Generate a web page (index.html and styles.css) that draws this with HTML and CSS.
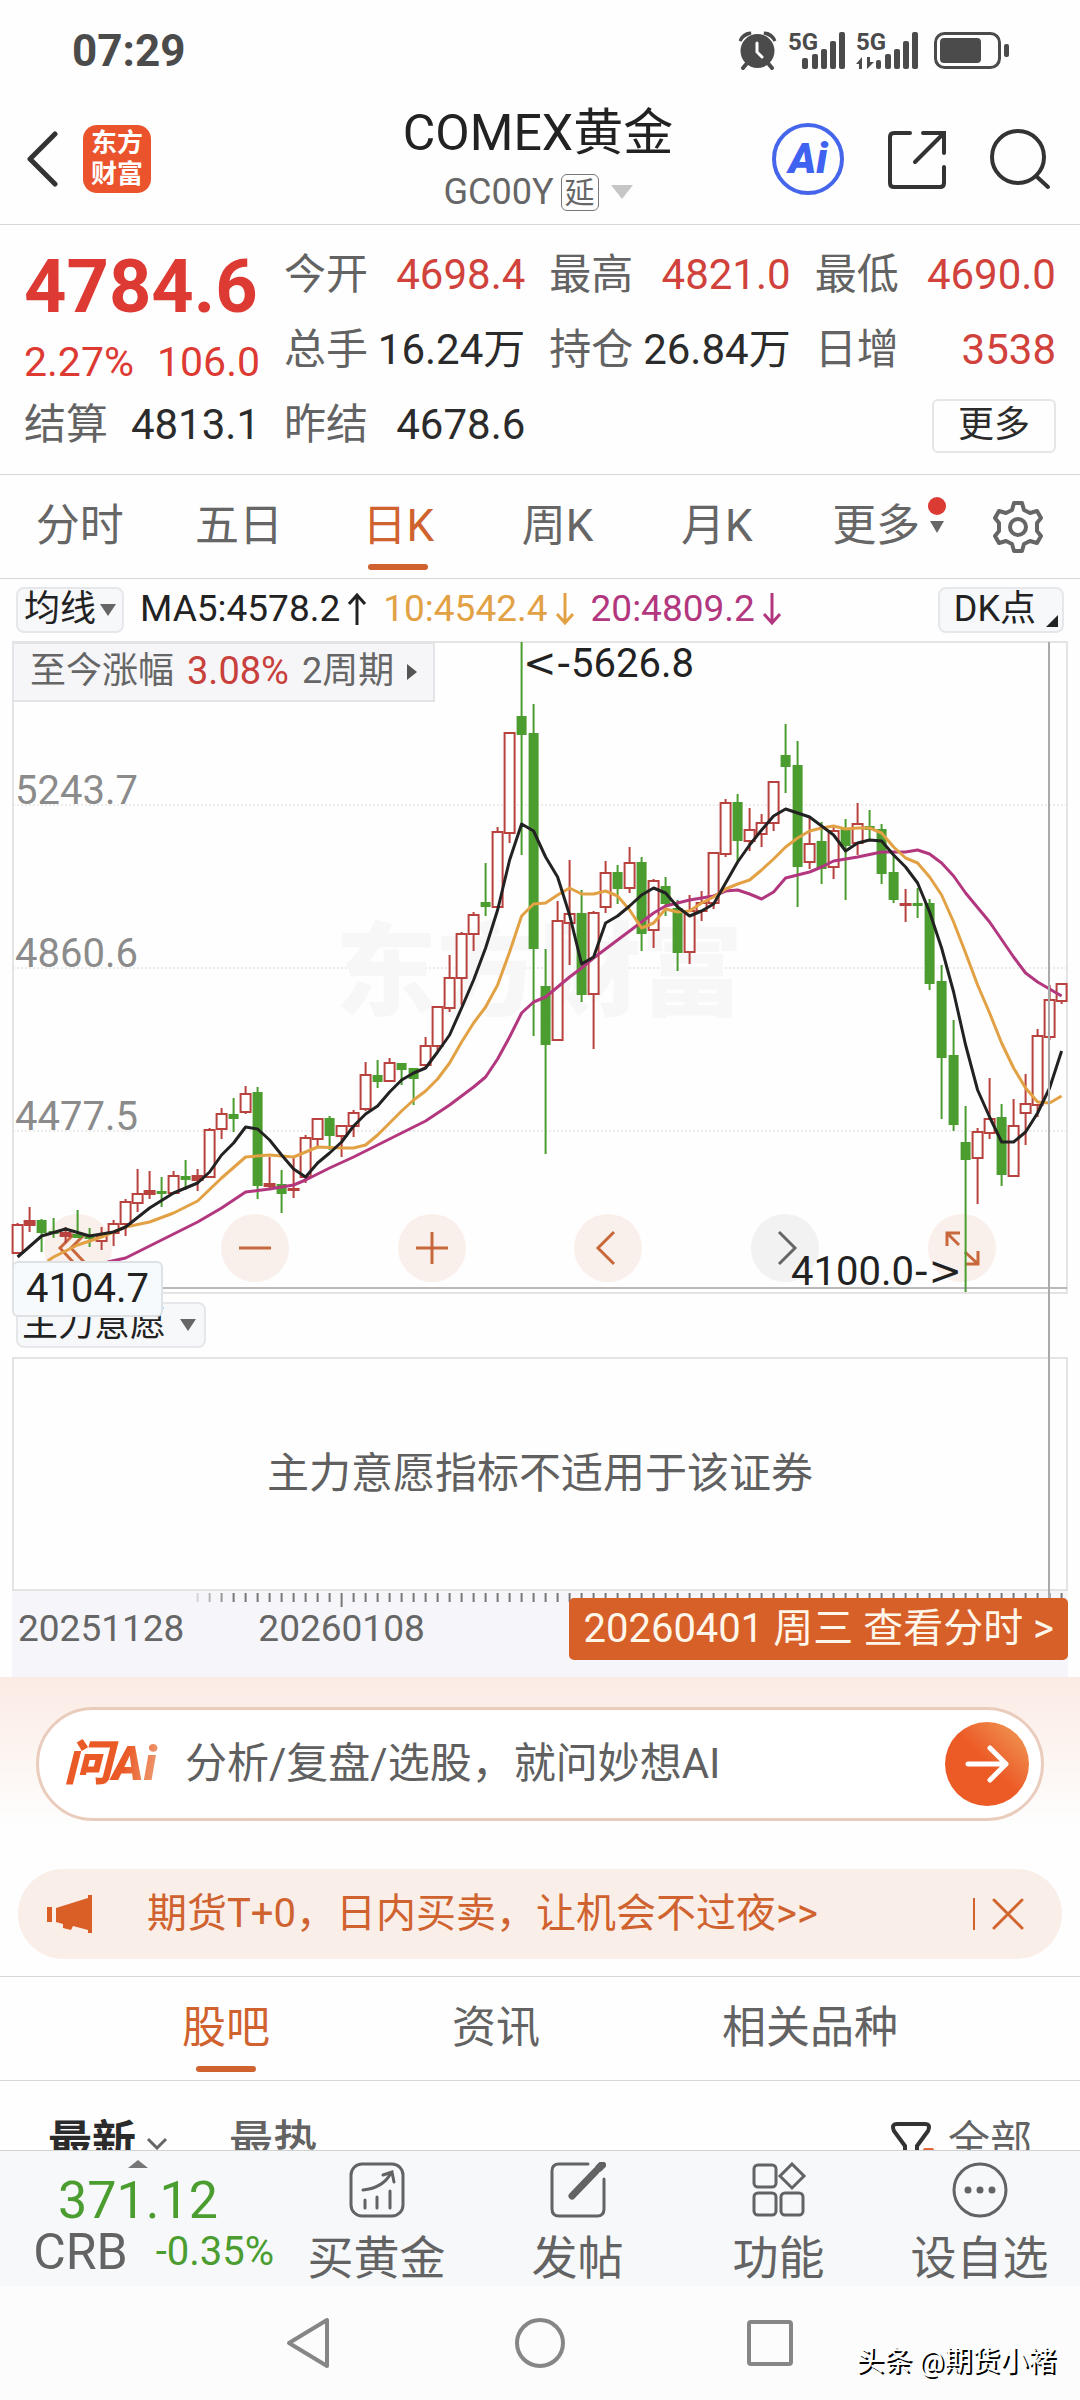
FILE: index.html
```html
<!DOCTYPE html>
<html lang="zh-CN">
<head>
<meta charset="utf-8">
<meta name="viewport" content="width=device-width, initial-scale=1">
<title>COMEX黄金 GC00Y</title>
<link rel="stylesheet" href="styles.css">
</head>
<body>
<div class="status">
  <span class="clock">07:29</span>
  <svg class="status-icons" width="276" height="44" viewBox="734 29 276 44" aria-hidden="true">
    <g fill="#4b4b4b">
      <circle cx="757.500" cy="51" r="17"/>
      <path d="M740 41a11 11 0 0 1 11-8q-8 2-11 8zM775 41a11 11 0 0 0-11-8q8 2 11 8z" stroke="#4b4b4b" stroke-width="3"/>
      <path d="M743 68l5-6M772 68l-5-6" stroke="#4b4b4b" stroke-width="4" stroke-linecap="round"/>
      <path d="M757 43v9l5 5" fill="none" stroke="#fff" stroke-width="3" stroke-linecap="round"/>
      <text class="net" x="788" y="50">5G</text>
      <text class="net" x="856" y="50">5G</text>
      <rect x="802" y="58" width="6" height="11" rx="2"/><rect x="812" y="54" width="6" height="15" rx="2"/><rect x="821" y="49" width="6" height="20" rx="2"/><rect x="830" y="41" width="6" height="28" rx="2"/><rect x="839" y="32" width="6" height="37" rx="2"/>
      <rect x="876" y="60" width="5" height="9" rx="2"/><rect x="885" y="54" width="6" height="15" rx="2"/><rect x="894" y="49" width="6" height="20" rx="2"/><rect x="903" y="41" width="6" height="28" rx="2"/><rect x="912" y="32" width="6" height="37" rx="2"/>
      <path d="M856 64l6-7v12h-3v-5zM867 57v12l7-7h-4v-5z"/>
      <rect x="935.500" y="33.500" width="64" height="34" rx="9" fill="none" stroke="#4b4b4b" stroke-width="3"/>
      <rect x="940" y="38" width="41" height="25" rx="4"/>
      <rect x="1004" y="44" width="5" height="13" rx="2"/>
    </g>
  </svg>
</div>

<header class="header">
  <div class="header-left">
    <button class="icon-btn" aria-label="返回"><svg width="34" height="56" viewBox="0 0 34 56"><path d="M31 3L6 28l25 25" fill="none" stroke="#333" stroke-width="5" stroke-linecap="round" stroke-linejoin="round"/></svg></button>
    <a class="brand" href="#">东方<br>财富</a>
  </div>
  <div class="title">
    <h1>COMEX黄金</h1>
    <button class="code">GC00Y<span class="delay">延</span><svg width="22" height="16" viewBox="0 0 22 16"><path d="M0 1h22L11 15z" fill="#c6c6c6"/></svg></button>
  </div>
  <div class="header-right">
    <button class="ai-btn" aria-label="Ai">Ai</button>
    <button class="icon-btn" aria-label="分享"><svg width="62" height="62" viewBox="0 0 62 62" fill="none" stroke="#333" stroke-width="4" stroke-linecap="round"><path d="M24 5H8q-4 0-4 4v46q0 4 4 4h46q4 0 4-4V39M37 5h21v20M57 6L29 34"/></svg></button>
    <button class="icon-btn" aria-label="搜索"><svg width="62" height="62" viewBox="0 0 62 62" fill="none" stroke="#333" stroke-width="4" stroke-linecap="round"><circle cx="28" cy="29" r="26"/><path d="M46 48l12 11"/></svg></button>
  </div>
</header>

<section class="quote">
  <div class="last">
    <strong>4784.6</strong>
    <p><span>2.27%</span><span>106.0</span></p>
  </div>
  <div class="stat"><span>今开</span><b class="up">4698.4</b></div>
  <div class="stat"><span>最高</span><b class="up">4821.0</b></div>
  <div class="stat"><span>最低</span><b class="up">4690.0</b></div>
  <div class="stat"><span>总手</span><b>16.24万</b></div>
  <div class="stat"><span>持仓</span><b>26.84万</b></div>
  <div class="stat"><span>日增</span><b class="up">3538</b></div>
  <div class="stat"><span>结算</span><b>4813.1</b></div>
  <div class="stat"><span>昨结</span><b>4678.6</b></div>
  <button class="more">更多</button>
</section>

<nav class="periods">
  <button>分时</button>
  <button>五日</button>
  <button class="on">日K</button>
  <button>周K</button>
  <button>月K</button>
  <button>更多<svg class="drop" width="24" height="48" viewBox="0 0 24 48"><circle cx="12" cy="12" r="9" fill="#db3b32"/><path d="M5 27h14l-7 12z" fill="#666"/></svg></button>
  <button class="gear" aria-label="设置"><svg width="52" height="54" viewBox="0 0 52 54" fill="none" stroke="#666" stroke-width="4" stroke-linejoin="round"><path d="M22 3h8l2 7 6 3 7-2 4 7-4 5v8l4 5-4 7-7-2-6 3-2 7h-8l-2-7-6-3-7 2-4-7 4-5v-8l-4-5 4-7 7 2 6-3z"/><circle cx="26" cy="27" r="8"/></svg></button>
</nav>

<div class="ma">
  <button class="chip">均线<svg width="16" height="14" viewBox="0 0 16 14"><path d="M0 1h16L8 13z" fill="#666"/></svg></button>
  <span class="ma5">MA5:4578.2<svg width="20" height="34" viewBox="0 0 20 34"><path d="M10 33V3M2 12l8-9 8 9"/></svg></span>
  <span class="ma10">10:4542.4<svg width="20" height="34" viewBox="0 0 20 34"><path d="M10 1v30M2 22l8 9 8-9"/></svg></span>
  <span class="ma20">20:4809.2<svg width="20" height="34" viewBox="0 0 20 34"><path d="M10 1v30M2 22l8 9 8-9"/></svg></span>
  <button class="chip dk">DK点<svg width="12" height="12" viewBox="0 0 12 12"><path d="M12 0v12H0z" fill="#222"/></svg></button>
</div>

<main class="chart">
  <div class="kline">
    <div class="controls">
      <button aria-label="最早"><svg viewBox="0 0 68 68"><path d="M30 20L16 34l14 15M41 20L27 34l14 15"/></svg></button>
      <button aria-label="缩小"><svg viewBox="0 0 68 68"><path d="M18 34h32"/></svg></button>
      <button aria-label="放大"><svg viewBox="0 0 68 68"><path d="M18 34h32M34 18v32"/></svg></button>
      <button aria-label="向左"><svg viewBox="0 0 68 68"><path d="M40 18L24 34l16 16"/></svg></button>
      <button class="off" aria-label="向右"><svg viewBox="0 0 68 68"><path d="M28 18l16 16-16 16"/></svg></button>
      <button aria-label="全屏"><svg viewBox="0 0 68 68"><path d="M32 19H19v13M19 19l12 12M37 50h13V37M50 50L37 38"/></svg></button>
    </div>
    <svg id="plot" class="plot" viewBox="0 0 1080 654">
      <g class="grid"><path d="M13 165H1067M13 328H1067M13 491H1067"/></g>
      <rect class="frame" x="13" y="2" width="1054" height="651"/>
      <text class="mark" x="335" y="368">东方财富</text>
      <text class="scale" x="15" y="164">5243.7</text>
      <text class="scale" x="15" y="327">4860.6</text>
      <text class="scale" x="15" y="490">4477.5</text>
      <g id="candles"></g>
      <g id="averages"></g>
      <path class="cursor" d="M13 648H1067"/>
      <text class="peak" x="523" y="37"><tspan class="arrow">&lt;-</tspan>5626.8</text>
      <text class="peak" x="791" y="645">4100.0<tspan class="arrow">-&gt;</tspan></text>
    </svg>
    <button class="since">至今涨幅 <em>3.08%</em> 2周期<svg width="10" height="16" viewBox="0 0 10 16"><path d="M0 0l10 8-10 8z" fill="#555"/></svg></button>
    <span class="price-tag">4104.7</span>
  </div>
  <div class="indicator"><button class="chip">主力意愿<svg width="16" height="14" viewBox="0 0 16 14"><path d="M0 1h16L8 13z" fill="#666"/></svg></button></div>
  <div class="sub">主力意愿指标不适用于该证券</div>
  <div class="axis">
    <svg id="ticks" class="ticks" viewBox="12 0 1056 16"></svg>
    <span>20251128</span>
    <span>20260108</span>
    <a class="day" href="#">20260401 周三 查看分时 &gt;</a>
  </div>
  <i class="crosshair"></i>
</main>

<section class="ask">
  <form class="ask-box">
    <label class="ask-logo" for="q">问Ai</label>
    <input id="q" type="text" placeholder="分析/复盘/选股，就问妙想AI">
    <button type="button" aria-label="发送"><svg width="44" height="40" viewBox="0 0 44 40"><path d="M3 20h38M25 4l16 16-16 16" fill="none" stroke="#fff" stroke-width="5" stroke-linecap="round" stroke-linejoin="round"/></svg></button>
  </form>
</section>

<aside class="notice">
  <svg width="46" height="40" viewBox="0 0 46 40"><path d="M0 13h5v15H0zM9 14L41 4V1h4v38h-4v-3l-15-4-2 4-8-2v-4l-7-2z" fill="#d95f27"/></svg>
  <a href="#">期货T+0，日内买卖，让机会不过夜&gt;&gt;</a>
  <button aria-label="关闭"><svg width="32" height="32" viewBox="0 0 32 32"><path d="M2 2l28 28M30 2L2 30" stroke="#d2652f" stroke-width="3" stroke-linecap="round"/></svg></button>
</aside>

<nav class="feeds">
  <button class="on">股吧</button>
  <button>资讯</button>
  <button>相关品种</button>
</nav>

<div class="sort">
  <button class="latest">最新<svg width="22" height="14" viewBox="0 0 22 14"><path d="M2 2l9 9 9-9" fill="none" stroke="#666" stroke-width="3"/></svg></button>
  <button class="hot">最热</button>
  <button class="filter"><svg width="44" height="44" viewBox="0 0 44 44"><path d="M15 42V25L4 10q-3-7 3-7h28q6 0 3 7L27 25v17" fill="none" stroke="#333" stroke-width="4"/><rect x="33" y="27" width="11" height="5" rx="2" fill="#e2673a"/></svg>全部</button>
</div>

<footer class="dock">
  <a class="index" href="#">
    <svg width="20" height="8" viewBox="0 0 20 8"><path d="M10 0l10 8H0z" fill="#777"/></svg>
    <strong>371.12</strong>
    <span>CRB<em>-0.35%</em></span>
  </a>
  <a class="act" href="#"><svg width="56" height="56" viewBox="0 0 56 56"><rect x="2" y="2" width="52" height="52" rx="11"/><path d="M14 28q20-2 28-17M34 13l9-3 2 10M16 38v8M28 35v11M41 29v17"/></svg>买黄金</a>
  <a class="act" href="#"><svg width="56" height="56" viewBox="0 0 56 56"><path d="M38 2H9q-7 0-7 7v38q0 7 7 7h38q7 0 7-7V17"/><path d="M22 34L46 9" stroke-width="7"/><path d="M49 6l3-3" stroke-width="8"/></svg>发帖</a>
  <a class="act" href="#"><svg width="56" height="56" viewBox="0 0 56 56"><rect x="3" y="3" width="22" height="22" rx="4"/><rect x="3" y="31" width="22" height="22" rx="4"/><rect x="30" y="31" width="22" height="22" rx="4"/><path d="M41 2l12 12-12 12-12-12z"/></svg>功能</a>
  <a class="act" href="#"><svg width="56" height="56" viewBox="0 0 56 56"><circle cx="28" cy="28" r="26"/><path d="M16 28h0M28 28h0M40 28h0" stroke-width="7"/></svg>设自选</a>
</footer>

<div class="system">
  <button aria-label="返回"><svg width="54" height="54" viewBox="0 0 54 54"><path d="M44 4v46L6 27z"/></svg></button>
  <button aria-label="主页"><svg width="54" height="54" viewBox="0 0 54 54"><circle cx="27" cy="27" r="23"/></svg></button>
  <button aria-label="最近任务"><svg width="54" height="54" viewBox="0 0 54 54"><rect x="6" y="6" width="42" height="42" rx="2"/></svg></button>
  <span class="credit">头条 @期货小褚</span>
</div>
<script src="chart.js"></script>
</body>
</html>
```
FILE: styles.css
```css
* { box-sizing: border-box; }

body {
  margin: 0;
  background: #fefefe;
  color: #2b2b2b;
  font-family: Roboto, "Noto Sans CJK SC", sans-serif;
  line-height: 1.2;
}

button {
  margin: 0;
  padding: 0;
  border: 0;
  background: none;
  color: inherit;
  font: inherit;
}

a { color: inherit; text-decoration: none; }
svg { display: block; flex: none; }
em { font-style: normal; }

/* status bar */
.status {
  display: flex;
  justify-content: space-between;
  padding: 29px 70px 7px 72px;
  height: 80px;
}
.clock { font-size: 44px; line-height: 44px; font-weight: 700; color: #4b4b4b; }
.net { font-size: 24px; font-weight: 700; }

/* header */
.header {
  display: grid;
  grid-template-columns: 1fr auto 1fr;
  align-items: center;
  padding: 20px 28px 6px 24px;
  border-bottom: 1px solid #d6d6d6;
}
.header-left, .header-right { display: flex; align-items: center; }
.header-left { gap: 25px; }
.header-right { gap: 42px; justify-content: flex-end; }
.brand {
  width: 68px;
  height: 68px;
  padding: 3px 0;
  border-radius: 14px;
  background: #ea532b;
  color: #fff;
  font-size: 26px;
  line-height: 31px;
  font-weight: 700;
  text-align: center;
}
.title { text-align: center; }
.title h1 { margin: 0; font-size: 50px; line-height: 66px; font-weight: 400; color: #222; }
.code {
  display: flex;
  align-items: center;
  justify-content: center;
  gap: 7px;
  width: 100%;
  font-size: 36px;
  line-height: 52px;
  color: #666;
}
.delay { padding: 0 3px; border: 1px solid #777; border-radius: 6px; font-size: 30px; line-height: 35px; }
.code svg { margin-left: 5px; }
.ai-btn {
  width: 72px;
  height: 72px;
  border: 4px solid #4565ea;
  border-radius: 50%;
  color: #3f62f0;
  font-size: 42px;
  line-height: 60px;
  font-weight: 900;
  font-style: italic;
}

/* quote */
.quote {
  display: grid;
  grid-template-columns: 236px repeat(3, 1fr);
  grid-auto-rows: 75px;
  column-gap: 24px;
  padding: 13px 24px 11px;
  border-bottom: 1px solid #d6d6d6;
}
.last { grid-row: span 2; color: #dd3a33; }
.last strong { display: block; font-size: 74px; line-height: 98px; font-weight: 700; }
.last p { display: flex; justify-content: space-between; margin: 0; font-size: 41px; line-height: 52px; }
.stat { display: flex; justify-content: space-between; align-items: center; font-size: 42px; white-space: nowrap; }
.stat span { color: #636363; }
.stat b { font-weight: 400; color: #2b2b2b; }
.stat .up { color: #d0423b; }
.more {
  grid-column: 4;
  justify-self: end;
  align-self: center;
  width: 124px;
  height: 54px;
  border: 2px solid #e6e6e6;
  border-radius: 6px;
  font-size: 36px;
}

/* period tabs */
.periods { display: flex; border-bottom: 1px solid #d6d6d6; color: #666; }
.periods button { position: relative; flex: 159; height: 103px; font-size: 44px; }
.periods .gear { flex: 124; display: flex; align-items: center; justify-content: center; }
.on { color: #cf622e; }
.on::after {
  content: "";
  position: absolute;
  bottom: 8px;
  left: 50%;
  width: 60px;
  height: 6px;
  margin-left: -30px;
  border-radius: 3px;
  background: #cf622e;
}
.drop { position: absolute; left: 129px; top: 19px; }

/* moving averages */
.ma { display: flex; align-items: center; gap: 16px; height: 61px; padding: 0 16px; font-size: 37px; white-space: nowrap; }
.ma span { display: flex; align-items: center; gap: 7px; }
.ma span svg { fill: none; stroke: currentColor; stroke-width: 3; }
.ma5 { color: #222; }
.ma10 { color: #e2a144; }
.ma20 { color: #b2377e; }
.chip {
  display: flex;
  align-items: center;
  gap: 4px;
  height: 46px;
  padding: 0 6px;
  border: 2px solid #e5e7ea;
  border-radius: 8px;
  background: #f6f8fa;
  font-size: 36px;
  color: #222;
}
.dk { margin-left: auto; padding: 0 4px 0 14px; gap: 10px; }
.dk svg { align-self: flex-end; margin-bottom: 4px; }

/* chart */
.chart { position: relative; }
.kline { position: relative; }
.plot { position: relative; width: 100%; height: auto; pointer-events: none; }
.grid { stroke: #ececec; stroke-width: 2; stroke-dasharray: 2 2; }
.frame { fill: none; stroke: #e4e4e4; stroke-width: 2; }
.mark { font-size: 102px; font-weight: 900; fill: #f7f7f7; }
.scale { font-size: 40px; fill: #8b8b8b; }
.peak { font-size: 40px; fill: #222; }
.arrow { font-family: "DejaVu Sans", sans-serif; }
.cursor { stroke: #777; stroke-width: 1; }
.up-bar { stroke: #b8423e; stroke-width: 2; fill: #fff; }
.up-bar.flat { fill: #b8423e; }
.down-bar { stroke: #4b9d30; stroke-width: 2; fill: #4b9d30; }
.avg { fill: none; stroke-width: 3; stroke-linejoin: round; }
.avg.a5 { stroke: #222; }
.avg.a10 { stroke: #e2a144; }
.avg.a20 { stroke: #b2377e; }

.controls {
  position: absolute;
  left: 44px;
  right: 84px;
  bottom: 12px;
  display: flex;
  justify-content: space-between;
}
.controls button { width: 68px; height: 68px; border-radius: 50%; background: #faf0eb; }
.controls svg { fill: none; stroke: #c9683c; stroke-width: 3; }
.controls .off { background: #f2f2f2; }
.controls .off svg { stroke: #666; }

.since {
  position: absolute;
  left: 12px;
  top: 2px;
  display: flex;
  align-items: center;
  gap: 13px;
  height: 60px;
  padding: 0 16px;
  border: 2px solid #e4e4e8;
  background: #f6f6f9;
  font-size: 36px;
  color: #666;
}
.since em { color: #c8403b; font-size: 38px; }
.price-tag {
  position: absolute;
  left: 12px;
  bottom: -23px;
  padding: 0 12px;
  border: 2px solid #dfe2e5;
  border-radius: 6px;
  background: #f7fafc;
  font-size: 40px;
  line-height: 52px;
  color: #222;
  z-index: 1;
}
.indicator { height: 63px; padding: 8px 16px; }
.indicator .chip { gap: 14px; padding: 0 8px 0 4px; }
.sub {
  display: flex;
  align-items: center;
  justify-content: center;
  height: 234px;
  margin: 0 12px;
  border: 2px solid #e4e4e4;
  font-size: 42px;
  color: #606060;
}
.axis {
  position: relative;
  display: flex;
  align-items: flex-start;
  gap: 74px;
  height: 86px;
  margin: 0 12px;
  padding: 7px 0 0 6px;
  background: #f6f6fa;
  font-size: 37px;
  line-height: 62px;
  color: #666;
  white-space: nowrap;
}
.ticks { position: absolute; left: 0; top: 0; width: 100%; }
.ticks path { stroke: #777; stroke-width: 2; }
.day {
  position: relative;
  margin-left: auto;
  padding: 0 14px;
  border-radius: 5px;
  background: #d76029;
  color: #fff6ea;
  font-size: 40px;
}
.crosshair { position: absolute; left: 97%; top: 2px; bottom: 79px; width: 2px; background: #aaa; }

/* assistant */
.ask { padding: 30px 36px 39px; background: linear-gradient(#fbebe4, #fefefe 150px); }
.ask-box {
  display: flex;
  align-items: center;
  height: 114px;
  padding: 0 12px 0 25px;
  border: 3px solid #eaccbd;
  border-radius: 57px;
  background: #fff;
}
.ask-logo {
  width: 121px;
  font-size: 48px;
  font-weight: 900;
  font-style: italic;
  background: linear-gradient(100deg, #ea5a26 50%, #f0b08c 85%);
  background-clip: text;
  color: transparent;
}
.ask-box input {
  flex: 1;
  min-width: 0;
  padding: 0;
  border: 0;
  background: none;
  font: inherit;
  font-size: 42px;
}
.ask-box input::placeholder { color: #606060; opacity: 1; }
.ask-box button {
  display: flex;
  align-items: center;
  justify-content: center;
  width: 84px;
  height: 84px;
  border-radius: 50%;
  background: linear-gradient(45deg, #ec5a26 50%, #f0a05a);
}

/* notice */
.notice {
  display: flex;
  align-items: center;
  height: 90px;
  margin: 9px 18px 17px;
  padding: 0 38px 0 29px;
  border-radius: 45px;
  background: #faeee8;
  color: #cf622e;
}
.notice a { flex: 1; margin-left: 54px; font-size: 40px; }
.notice button { padding-left: 17px; border-left: 2px solid #cf622e; }

/* feed tabs */
.feeds {
  display: flex;
  justify-content: space-evenly;
  border-top: 1px solid #d6d6d6;
  border-bottom: 1px solid #d6d6d6;
  color: #636363;
}
.feeds button { position: relative; height: 103px; font-size: 44px; }
.feeds .on { color: #cf622e; }

/* sort row, cut off by the dock */
.sort {
  display: flex;
  align-items: flex-start;
  height: 69px;
  padding: 35px 48px 0;
  overflow: hidden;
  color: #636363;
  font-size: 44px;
  line-height: 52px;
}
.sort button { display: flex; align-items: center; gap: 10px; }
.latest { font-weight: 700; color: #2b2b2b; }
.latest svg { margin-top: 4px; }
.hot { margin-left: 61px; font-weight: 500; }
.sort .filter { margin-left: auto; gap: 14px; font-size: 42px; }
.filter svg { margin-top: 2px; }

/* dock */
.dock {
  display: grid;
  grid-template-columns: 276px repeat(4, 1fr);
  border-top: 1px solid #d0d2d4;
  background: #f6f8fa;
  color: #636363;
}
.index { display: flex; flex-direction: column; align-items: center; padding-top: 9px; }
.index strong { font-size: 52px; line-height: 66px; font-weight: 400; color: #4b9d30; }
.index span { display: flex; align-items: center; align-self: flex-end; gap: 28px; padding-right: 2px; font-size: 50px; line-height: 36px; white-space: nowrap; }
.index em { font-size: 40px; color: #4b9d30; }
.act { display: flex; flex-direction: column; align-items: center; gap: 10px; padding: 11px 0 0; height: 135px; font-size: 46px; line-height: 60px; }
.act svg { fill: none; stroke: #636363; stroke-width: 3; stroke-linecap: round; }

/* system navigation */
.system { position: relative; display: flex; justify-content: center; align-items: center; height: 114px; background: #fcfcfc; }
.system button { display: flex; justify-content: center; width: 230px; }
.system svg { fill: none; stroke: #868686; stroke-width: 4; stroke-linejoin: round; }
.credit {
  position: absolute;
  right: 24px;
  bottom: 20px;
  font-size: 28px;
  line-height: 36px;
  color: #fff;
  text-shadow: 2px 2px 0 #000;
}
```
FILE: chart.js
```js
// Each row: r (rise) or g (fall), then high, body top, body bottom, low, in plot units.
const bars = `r583,585,613,613 r567,581,585,592 g579,581,592,612 g578,592,593,598 r587,593,596,603
g570,595,597,598 g588,595,598,607 r587,596,601,610 r580,584,593,606 r559,562,584,596
r529,554,563,572 r531,551,554,559 g537,552,553,567 r531,536,553,553 g520,537,539,550
r529,536,540,551 r488,490,537,537 r468,474,489,499 g458,475,478,492 r446,454,472,474
g447,453,545,559 r517,544,546,548 g530,545,553,573 r518,549,550,558 r495,498,537,543
r478,479,499,506 g476,479,495,510 r485,486,496,517 r470,473,486,497 r422,435,469,471
g420,436,441,448 r418,423,441,441 g423,424,429,445 g428,429,438,465 r397,406,425,427
r366,367,406,411 r315,338,368,372 r292,294,338,365 r272,275,294,311 g223,263,266,276
r187,192,267,267 r92,93,193,203 g2,77,94,215 g64,94,308,396 g309,347,404,514
r261,281,400,400 r220,274,283,325 g250,274,354,362 r271,273,354,409 r221,233,267,273
g225,233,248,264 r207,223,248,253 g217,223,293,311 r239,241,290,308 g237,247,263,276
g260,269,312,331 r255,271,312,324 r251,263,271,281 r213,213,263,269 r159,163,214,217
g154,163,200,221 r168,190,201,211 r174,183,194,207 r142,142,183,191 g84,116,126,153
g101,126,226,267 r176,204,222,229 g182,202,228,244 r186,191,227,239 g179,190,205,260
r163,184,203,215 g170,187,189,200 g184,190,233,244 g214,233,259,263 r249,264,265,282
g248,264,265,278 g259,264,343,350 g325,342,417,479 g380,416,484,491 g466,503,519,652
r488,492,518,564 r438,479,493,499 g464,478,534,546 r459,486,536,536 r434,464,473,505
r389,396,465,477 r345,360,397,400 r343,344,361,364`.split(/\s+/);

// Moving averages: bar index and level.
const averages = {
  a20: "7.5,622 9,618 11,606 13,594 15,582 17,568 19,552 21,549 23,545 24,540 26,528 28,517 30,505 32,493 34,481 36,465 38,447 39,437 40,419 41,397 42,373 43,362 44,357 46,337 47,328 48,318 50,300 52,282 53,273 54,266 56,260 58,256 59,251 60,250 61,254 62,259 63,252 64,238 65,235 66,232 67,227 68,221 69,219 70,217 72,212 73,212 74,212 75,210 76,214 77,223 78,236 79,253 81,282 83,317 84,333 85,342 86,349 87,356",
  a10: "2.5,621 3,617 5,605 7,597 9,587 11,582 13,573 15,561 17,538 19,517 21,515 23,517 24,512 25,507 27,508 28,508 29,505 30,495 32,471 33,460 34,451 35,439 36,423 37,402 38,383 39,367 40,345 41,312 42,276 43,264 44,263 45,255 46,248 47,254 48,254 49,251 50,256 51,270 52,288 53,283 54,269 55,272 56,271 57,263 58,257 59,249 60,244 61,240 62,230 63,219 64,207 65,198 66,191 67,188 68,186 69,189 70,188 71,188 72,193 73,207 74,218 75,223 76,237 77,255 78,282 79,313 80,345 81,373 82,403 83,428 84,448 85,462 86,463 87,456",
  a5: "0,617 2,596 4,589 6,596 8,592 9,587 11,568 13,553 15,543 16,532 17,515 18,503 19,487 20,489 21,500 22,515 23,529 24,537 25,523 26,513 27,502 28,486 29,474 30,466 31,452 32,440 33,433 34,428 35,412 36,395 37,368 38,340 39,308 40,270 41,220 42,184 43,191 44,217 45,237 46,275 47,324 48,317 49,283 50,276 51,266 52,255 53,248 54,253 55,267 56,276 57,271 58,264 59,243 60,222 61,205 62,190 63,176 64,169 65,173 66,177 67,186 68,195 69,211 70,203 71,200 72,201 73,215 74,227 75,243 76,272 77,308 78,352 79,405 80,450 81,477 82,502 83,502 84,492 85,473 86,448 87,411"
};

const NS = "http://www.w3.org/2000/svg";
const x = i => 17.6 + i * 12;

function path(parent, d, cls) {
  const el = document.createElementNS(NS, "path");
  el.setAttribute("d", d);
  if (cls) el.setAttribute("class", cls);
  document.getElementById(parent).appendChild(el);
  return el;
}

bars.forEach((bar, i) => {
  const [high, top, bottom, low] = bar.slice(1).split(",").map(Number);
  const flat = bottom - top < 5 ? " flat" : "";
  const half = bar[0] === "r" ? 5 : 4;
  const c = x(i);
  path("candles",
    `M${c} ${high}V${top}M${c} ${bottom}V${low}M${c - half} ${top}H${c + half}V${bottom}H${c - half}Z`,
    bar[0] === "r" ? "up-bar" + flat : "down-bar");
});

for (const [name, points] of Object.entries(averages)) {
  const d = points.split(" ").map(p => p.split(",").map(Number)).map(([i, y]) => `${x(i)} ${y}`);
  path("averages", "M" + d.join("L"), "avg " + name);
}

for (let i = 15; i < 88; i++) {
  const major = (i - 27) % 30 === 0;
  const tick = path("ticks", `M${x(i)} 2V${major ? 16 : 11}`);
  if (i < 18) tick.setAttribute("opacity", (i - 14) / 4);
}
```
